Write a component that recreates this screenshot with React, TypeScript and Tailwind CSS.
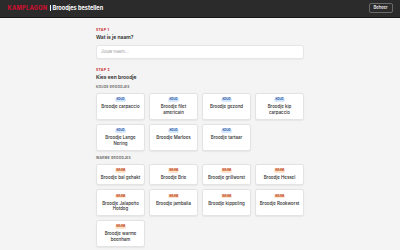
import React from "react";

type Sandwich = {
  name: string;
};

const koude: Sandwich[] = [
  { name: "Broodje carpaccio" },
  { name: "Broodje filet americain" },
  { name: "Broodje gezond" },
  { name: "Broodje kip carpaccio" },
  { name: "Broodje Lange Nering" },
  { name: "Broodje Marloes" },
  { name: "Broodje tartaar" },
];

const warme: Sandwich[] = [
  { name: "Broodje bal gehakt" },
  { name: "Broodje Brie" },
  { name: "Broodje grillworst" },
  { name: "Broodje Hessel" },
  { name: "Broodje Jalapeño Hotdog" },
  { name: "Broodje jambalia" },
  { name: "Broodje kippeling" },
  { name: "Broodje Rookworst" },
  { name: "Broodje warme beenham" },
];

function Card({ name, warm }: { name: string; warm?: boolean }) {
  return (
    <button className="flex flex-col items-center text-center bg-white rounded-[2.5px] border-[0.5px] border-[#e3e3e3] shadow-[0_0.4px_1.2px_rgba(0,0,0,0.06)] pt-[4.4px] pb-[3.6px] px-[3.5px]">
      <span
        className={
          warm
            ? "block h-[3.8px] px-[1.3px] rounded-full bg-[#ffe4cc] text-[#c2410c] text-[2.8px] leading-[3.8px] font-bold"
            : "block h-[3.8px] px-[1.3px] rounded-full bg-[#d6e8fb] text-[#1e4fa8] text-[2.8px] leading-[3.8px] font-bold"
        }
      >
        {warm ? "WARM" : "KOUD"}
      </span>
      <span className="block mt-[2.2px] text-[4.4px] leading-[5.4px] font-medium text-[#2a2a2a]">{name}</span>
    </button>
  );
}

function StepLabel({ children }: { children: React.ReactNode }) {
  return (
    <div className="text-[3.4px] leading-[5px] font-bold tracking-[0.1em] uppercase text-[#c62828]">{children}</div>
  );
}

function Heading({ children }: { children: React.ReactNode }) {
  return <h2 className="mt-[1.25px] text-[5px] leading-[7.5px] font-semibold text-[#262626]">{children}</h2>;
}

function GroupLabel({ children, className }: { children: React.ReactNode; className: string }) {
  return (
    <div className={`${className} text-[3.2px] leading-[5px] font-bold tracking-[0.1em] uppercase text-[#6b6b6b]`}>
      {children}
    </div>
  );
}

export default function App() {
  return (
    <div className="min-h-screen bg-[#f4f4f4] font-['Inter',sans-serif]">
      <header className="h-[17.5px] px-[7.5px] flex items-center justify-between bg-[#2b2b2b] border-b-[0.6px] border-[#171717]">
        <div className="flex items-center gap-[2.2px]">
          <span className="text-[5.6px] font-extrabold tracking-wider text-[#c8102e]">KAMPLAGON</span>
          <span className="w-[0.7px] h-[6.5px] bg-white"></span>
          <span className="text-[5.6px] font-bold text-white">Broodjes bestellen</span>
        </div>
        <button className="h-[10px] px-[3.8px] rounded-[2px] border-[0.7px] border-[#6a6a6a] text-[4.2px] font-medium text-white">
          Beheer
        </button>
      </header>

      <main className="w-[208px] mx-auto pt-[10px] pb-[6px]">
        <section>
          <StepLabel>Stap 1</StepLabel>
          <Heading>Wat is je naam?</Heading>
          <input
            placeholder="Jouw naam..."
            className="block mt-[3.75px] h-[13.7px] w-full rounded-[2.5px] border-[0.5px] border-[#e6e6e6] bg-white px-[4px] text-[4.4px] text-[#262626] placeholder:text-[#9a9a9a] outline-none shadow-[0_0.4px_1px_rgba(0,0,0,0.04)]"
          />
        </section>

        <section className="mt-[9.5px]">
          <StepLabel>Stap 2</StepLabel>
          <Heading>Kies een broodje</Heading>

          <GroupLabel className="mt-[3px]">Koude broodjes</GroupLabel>
          <div className="mt-[3px] grid grid-cols-4 gap-x-[4px] gap-y-[4.2px]">
            {koude.map((s) => (
              <Card key={s.name} name={s.name} />
            ))}
          </div>

          <GroupLabel className="mt-[5.6px]">Warme broodjes</GroupLabel>
          <div className="mt-[2.8px] grid grid-cols-4 gap-x-[4px] gap-y-[3.8px]">
            {warme.map((s) => (
              <Card key={s.name} name={s.name} warm />
            ))}
          </div>
        </section>
      </main>
    </div>
  );
}
